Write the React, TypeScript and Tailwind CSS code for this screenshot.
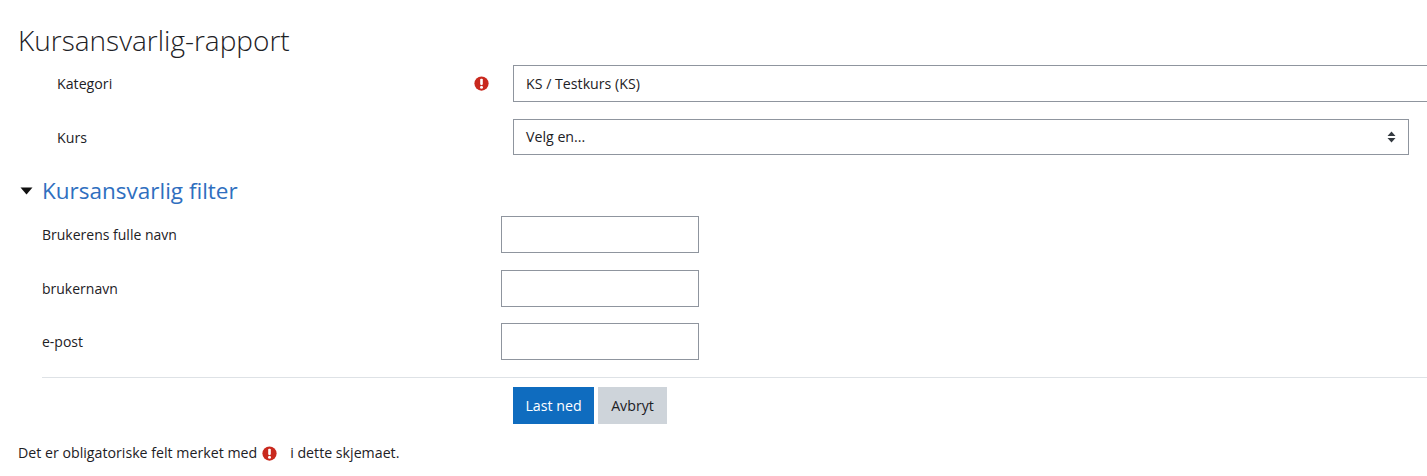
const Req = ({ className = "" }: { className?: string }) => (
  <svg viewBox="0 0 16 16" className={`w-[15px] h-[15px] shrink-0 ${className}`}>
    <circle cx="8" cy="8" r="7.6" fill="#c9291e" />
    <rect x="6.6" y="2.8" width="2.8" height="6.8" rx="1" fill="#fff" />
    <circle cx="8" cy="11.9" r="1.6" fill="#fff" />
  </svg>
);

const FilterRow = ({ label, mb }: { label: string; mb: string }) => (
  <div className={`flex items-start ${mb}`}>
    <div className="w-[459px] pt-[8px] leading-[22px] text-[14px]">{label}</div>
    <div className="w-[198px] h-[37px] border border-[#8f959e] bg-white" />
  </div>
);

export default function App() {
  return (
    <div className="h-[476px] w-[1427px] overflow-hidden bg-white pl-[18px] text-[14.2px] text-[#1d2125] [font-family:'Open_Sans','Noto_Sans',sans-serif]">
      <h1 className="pt-[22px] h-[65px] text-[28px] leading-[36px] font-light text-[#1d2125] whitespace-nowrap">Kursansvarlig-rapport</h1>
      <div className="flex items-start mb-[17px]">
        <div className="w-[456px] pl-[39px] pt-[8px] leading-[22px] flex-none">Kategori</div>
        <div className="w-[39px] pt-[11px] flex-none"><Req /></div>
        <div className="w-[1000px] flex-none h-[37px] border border-[#8f959e] px-3 flex items-center">KS / Testkurs (KS)</div>
      </div>
      <div className="flex items-start mb-[24px]">
        <div className="w-[495px] pl-[39px] pt-[8px] leading-[22px] flex-none">Kurs</div>
        <div className="w-[896px] flex-none h-[36px] border border-[#8f959e] pl-3 pr-[12px] flex items-center justify-between">
          <span>Velg en...</span>
          <svg viewBox="0 0 8 12" className="w-[9px] h-[12px]"><path d="M4 0.5 8 5H0z M0 7h8L4 11.5z" fill="#343a40" /></svg>
        </div>
      </div>
      <div className="flex items-center h-[26px] mb-[11px]">
        <svg viewBox="0 0 12 8" className="w-[13px] h-[8px] ml-[2px] mb-[3px]"><path d="M0 0.5h12L6 7.5z" fill="#111" /></svg>
        <h2 className="ml-[9px] -mt-[2px] text-[22.5px] leading-[26px] text-[#2f6fbf]">Kursansvarlig filter</h2>
      </div>
      <div className="pl-[24px]">
        <FilterRow label="Brukerens fulle navn" mb="mb-[17px]" />
        <FilterRow label="brukernavn" mb="mb-[16px]" />
        <FilterRow label="e-post" mb="mb-[17px]" />
        <div className="border-t border-[#dee2e6] mb-[9px]" />
        <div className="flex gap-[4px] pl-[471px] mb-[18px]">
          <div className="h-[37px] w-[81px] bg-[#0f6cbf] text-white flex items-center justify-center">Last ned</div>
          <div className="h-[37px] w-[69px] bg-[#ced4da] flex items-center justify-center">Avbryt</div>
        </div>
      </div>
      <div className="flex items-center leading-[22px] whitespace-nowrap">
        <span>Det er obligatoriske felt merket med</span>
        <Req className="ml-[5px] mr-[13px]" />
        <span>i dette skjemaet.</span>
      </div>
    </div>
  );
}
